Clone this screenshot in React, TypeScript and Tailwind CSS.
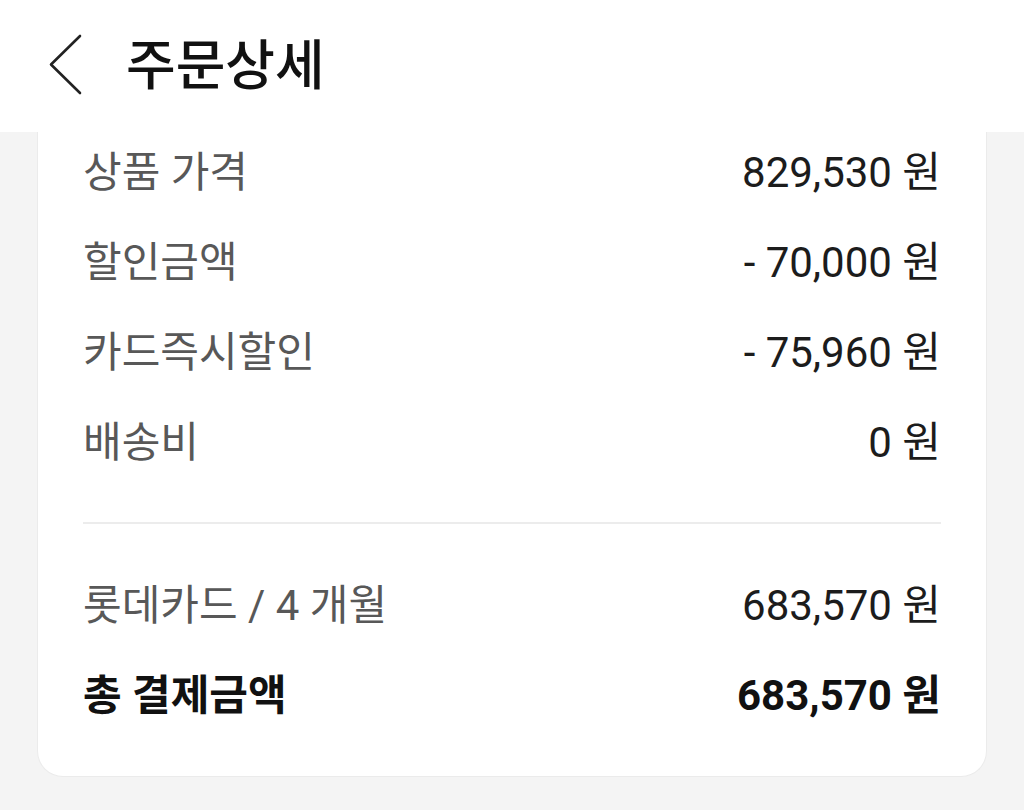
const rows = [
  { label: "상품 가격", value: "829,530 원" },
  { label: "할인금액", value: "- 70,000 원" },
  { label: "카드즉시할인", value: "- 75,960 원" },
  { label: "배송비", value: "0 원" },
];

function Row({ label, value, bold = false }: { label: string; value: string; bold?: boolean }) {
  return (
    <div className="flex h-[90px] items-center justify-between">
      <span
        className={
          bold
            ? "text-[42px] font-bold text-[#111111]"
            : "text-[42px] text-[#585858]"
        }
      >
        {label}
      </span>
      <span
        className={
          bold
            ? "text-[42px] font-bold text-[#111111]"
            : "text-[42px] text-[#1c1c1c]"
        }
      >
        {value}
      </span>
    </div>
  );
}

export default function App() {
  return (
    <div
      className="h-[810px] w-[1024px] overflow-hidden bg-[#f4f4f4]"
      style={{ fontFamily: "Roboto, 'Noto Sans CJK KR', sans-serif" }}
    >
      {/* Header */}
      <div className="relative z-10 flex h-[132px] items-center bg-white pl-[48px]">
        <svg width="36" height="62" viewBox="0 0 36 62" fill="none" className="mt-[-2px]">
          <path d="M32 2 L3 30.5 L32 59" stroke="#222" strokeWidth="2.6" strokeLinecap="round" strokeLinejoin="round" />
        </svg>
        <h1 className="ml-[42px] text-[54px] font-medium text-[#111111]">주문상세</h1>
      </div>

      {/* Card */}
      <div className="px-[37px]">
        <div className="rounded-b-[26px] border border-t-0 border-[#ebebeb] bg-white px-[45px] pb-[36px]">
          <div className="mt-[-5px]">
            {rows.map((r) => (
              <Row key={r.label} label={r.label} value={r.value} />
            ))}
          </div>
          <div className="mt-[35px] mb-[36px] h-[2px] bg-[#ececec]" />
          <Row label="롯데카드 / 4 개월" value="683,570 원" />
          <Row label="총 결제금액" value="683,570 원" bold />
        </div>
      </div>
    </div>
  );
}
